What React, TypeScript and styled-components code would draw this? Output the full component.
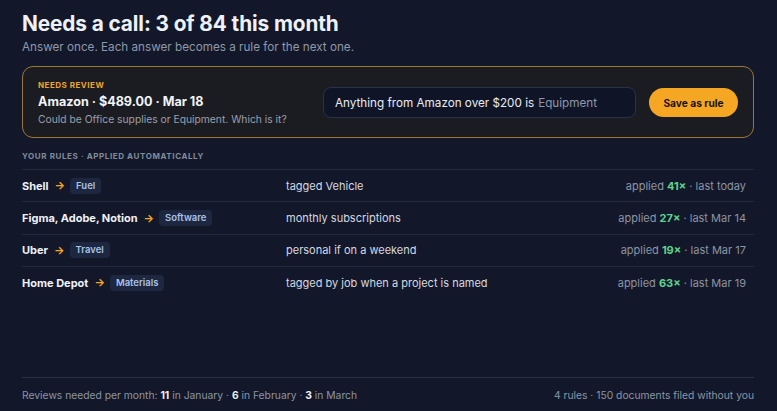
import React from 'react';
import styled, { createGlobalStyle } from 'styled-components';

const GlobalStyle = createGlobalStyle`
  html, body {
    margin: 0;
    padding: 0;
    background: #121829;
  }
  body {
    font-family: Inter, "Noto Sans", sans-serif;
    color: #e6eaf2;
    -webkit-font-smoothing: antialiased;
  }
`;

const Page = styled.div`
  width: 777px;
  height: 411px;
  box-sizing: border-box;
  padding: 10px 23px 0 22px;
  display: flex;
  flex-direction: column;
  overflow: hidden;
`;

const Title = styled.h1`
  margin: 0;
  font-size: 20.8px;
  font-weight: 700;
  line-height: 27px;
  color: #eef1f8;
  letter-spacing: -0.1px;
`;

const Subtitle = styled.p`
  margin: 2px 0 0;
  font-size: 11.7px;
  line-height: 16px;
  color: #8f97a8;
`;

const ReviewCard = styled.section`
  margin-top: 11px;
  height: 72px;
  box-sizing: border-box;
  border: 1px solid #9c7733;
  border-radius: 11px;
  background: #1b1c22;
  display: flex;
  align-items: center;
  padding: 1px 15px 0 15px;
`;

const ReviewInfo = styled.div`
  flex: 1;
  display: flex;
  flex-direction: column;
`;

const Eyebrow = styled.div`
  font-size: 8px;
  font-weight: 700;
  letter-spacing: 0.5px;
  color: #f0a42a;
  line-height: 11px;
`;

const ReviewTitle = styled.div`
  margin-top: 2px;
  font-size: 12.6px;
  font-weight: 700;
  line-height: 18px;
  color: #f1f3f8;
`;

const ReviewHint = styled.div`
  margin-top: 1px;
  font-size: 10.3px;
  line-height: 14px;
  color: #9a9fab;
`;

const RuleInput = styled.div`
  width: 313px;
  height: 31px;
  box-sizing: border-box;
  border: 1px solid #2a3247;
  border-radius: 8px;
  background: #0f1527;
  display: flex;
  align-items: center;
  padding: 0 11px;
  font-size: 11.7px;
  color: #e8ebf2;
  white-space: nowrap;
`;

const Placeholder = styled.span`
  color: #8e97ab;
  margin-left: 4px;
`;

const SaveButton = styled.button`
  margin-left: 13px;
  height: 29px;
  width: 89px;
  border: none;
  border-radius: 15px;
  background: #f5a623;
  color: #1a1408;
  font-family: inherit;
  font-size: 10.2px;
  font-weight: 700;
  padding: 0;
  cursor: pointer;
`;

const SectionLabel = styled.div`
  margin-top: 12px;
  font-size: 8px;
  font-weight: 700;
  letter-spacing: 0.6px;
  color: #838a9b;
  line-height: 12px;
  padding-bottom: 7px;
`;

const RuleList = styled.div`
  display: flex;
  flex-direction: column;
`;

const RuleRow = styled.div`
  height: 32.4px;
  box-sizing: border-box;
  border-top: 1px solid #222a3c;
  display: grid;
  grid-template-columns: 264px 1fr auto;
  align-items: center;
  padding-right: 8px;
  font-size: 11px;
`;

const Match = styled.div`
  display: flex;
  align-items: center;
  gap: 5px;
`;

const Vendor = styled.span`
  font-weight: 700;
  color: #eef1f7;
  margin-right: 1px;
`;

const Arrow = styled.span`
  color: #f5a623;
  font-size: 11px;
  font-weight: 700;
  line-height: 1;
`;

const Tag = styled.span`
  background: #1d2840;
  color: #aac1e8;
  font-size: 9.5px;
  font-weight: 600;
  line-height: 16px;
  padding: 0 6px;
  border-radius: 4px;
`;

const Description = styled.div`
  color: #d5d9e2;
`;

const Stats = styled.div`
  color: #8d94a4;
  white-space: nowrap;
`;

const Count = styled.b`
  color: #5fd38d;
  font-weight: 700;
`;

const Spacer = styled.div`
  flex: 1;
`;

const Footer = styled.footer`
  height: 33px;
  border-top: 1px solid #283043;
  display: flex;
  align-items: center;
  justify-content: space-between;
  font-size: 10.3px;
  color: #8d94a4;
`;

const Strong = styled.b`
  color: #eef1f7;
  font-weight: 700;
`;

const rules = [
  { vendor: 'Shell', tag: 'Fuel', desc: 'tagged Vehicle', count: 41, last: 'today' },
  { vendor: 'Figma, Adobe, Notion', tag: 'Software', desc: 'monthly subscriptions', count: 27, last: 'Mar 14' },
  { vendor: 'Uber', tag: 'Travel', desc: 'personal if on a weekend', count: 19, last: 'Mar 17' },
  { vendor: 'Home Depot', tag: 'Materials', desc: 'tagged by job when a project is named', count: 63, last: 'Mar 19' },
];

export default function App() {
  return (
    <>
      <GlobalStyle />
      <Page>
        <Title>Needs a call: 3 of 84 this month</Title>
        <Subtitle>Answer once. Each answer becomes a rule for the next one.</Subtitle>

        <ReviewCard>
          <ReviewInfo>
            <Eyebrow>NEEDS REVIEW</Eyebrow>
            <ReviewTitle>Amazon · $489.00 · Mar 18</ReviewTitle>
            <ReviewHint>Could be Office supplies or Equipment. Which is it?</ReviewHint>
          </ReviewInfo>
          <RuleInput>
            Anything from Amazon over $200 is<Placeholder>Equipment</Placeholder>
          </RuleInput>
          <SaveButton>Save as rule</SaveButton>
        </ReviewCard>

        <SectionLabel>YOUR RULES · APPLIED AUTOMATICALLY</SectionLabel>
        <RuleList>
          {rules.map((r) => (
            <RuleRow key={r.vendor}>
              <Match>
                <Vendor>{r.vendor}</Vendor>
                <Arrow>→</Arrow>
                <Tag>{r.tag}</Tag>
              </Match>
              <Description>{r.desc}</Description>
              <Stats>
                applied <Count>{r.count}×</Count> · last {r.last}
              </Stats>
            </RuleRow>
          ))}
        </RuleList>

        <Spacer />
        <Footer>
          <span>
            Reviews needed per month: <Strong>11</Strong> in January · <Strong>6</Strong> in February ·{' '}
            <Strong>3</Strong> in March
          </span>
          <span>4 rules · 150 documents filed without you</span>
        </Footer>
      </Page>
    </>
  );
}
